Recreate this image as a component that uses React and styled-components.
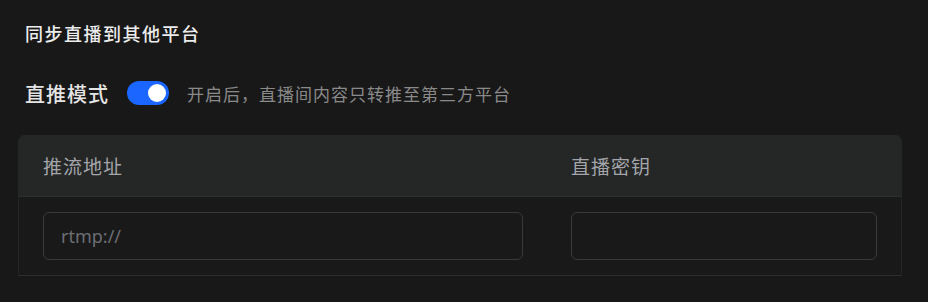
import React, { useState } from 'react';
import styled, { createGlobalStyle } from 'styled-components';

const GlobalStyle = createGlobalStyle`
  html, body {
    margin: 0;
    padding: 0;
    background: #181818;
  }
  body {
    font-family: "Noto Sans", "Noto Sans CJK SC", sans-serif;
  }
  * {
    box-sizing: border-box;
  }
`;

const Page = styled.div`
  width: 928px;
  height: 302px;
  padding: 22px 26px 0 18px;
  background: #181818;
  overflow: hidden;
`;

const Title = styled.h2`
  margin: 0 0 35px 7px;
  font-size: 18px;
  line-height: 24px;
  font-weight: 500;
  letter-spacing: 1.5px;
  color: #ececec;
`;

const ModeRow = styled.div`
  display: flex;
  align-items: center;
  height: 24px;
  margin: 0 0 30px 7px;
`;

const ModeLabel = styled.span`
  font-size: 20px;
  font-weight: 500;
  letter-spacing: 1px;
  color: #e4e4e4;
  margin-right: 18px;
`;

const Switch = styled.button`
  position: relative;
  width: 42px;
  height: 24px;
  padding: 0;
  border: none;
  border-radius: 12px;
  background: ${(p) => (p.$on ? '#1a66ff' : '#3a3a3a')};
  cursor: pointer;
  margin-right: 18px;
  flex-shrink: 0;

  &::after {
    content: '';
    position: absolute;
    top: 3px;
    left: ${(p) => (p.$on ? '21px' : '3px')};
    width: 18px;
    height: 18px;
    border-radius: 50%;
    background: #fff;
    transition: left 0.2s;
  }
`;

const Hint = styled.span`
  font-size: 17px;
  letter-spacing: 1px;
  color: #8a8a8a;
`;

const Table = styled.div`
  width: 884px;
  border: 1px solid #242525;
  border-bottom-color: #2d2d2d;
  border-radius: 6px 6px 0 0;
  overflow: hidden;
  background: #191919;
`;

const Row = styled.div`
  display: grid;
  grid-template-columns: 528px 1fr;
`;

const HeadRow = styled(Row)`
  height: 61px;
  background: #252727;
  border-bottom: 1px solid #2e2f2f;
`;

const HeadCell = styled.div`
  display: flex;
  align-items: center;
  padding: 0 24px;
  font-size: 19px;
  letter-spacing: 1px;
  color: #a3a5aa;
`;

const BodyCell = styled.div`
  padding: 15px 24px;
`;

const Input = styled.input`
  display: block;
  width: 100%;
  height: 48px;
  padding: 0 17px;
  border: 1px solid #393a3b;
  border-radius: 6px;
  background: #191919;
  font-family: "Noto Sans", "Noto Sans CJK SC", sans-serif;
  font-size: 18px;
  color: #d0d0d0;
  outline: none;

  &::placeholder {
    color: #6c6f75;
  }
`;

export default function App() {
  const [direct, setDirect] = useState(true);
  const [url, setUrl] = useState('');
  const [key, setKey] = useState('');

  return (
    <>
      <GlobalStyle />
      <Page>
        <Title>同步直播到其他平台</Title>
        <ModeRow>
          <ModeLabel>直推模式</ModeLabel>
          <Switch $on={direct} onClick={() => setDirect(!direct)} aria-label="直推模式" />
          <Hint>开启后，直播间内容只转推至第三方平台</Hint>
        </ModeRow>
        <Table>
          <HeadRow>
            <HeadCell>推流地址</HeadCell>
            <HeadCell>直播密钥</HeadCell>
          </HeadRow>
          <Row>
            <BodyCell>
              <Input placeholder="rtmp://" value={url} onChange={(e) => setUrl(e.target.value)} />
            </BodyCell>
            <BodyCell>
              <Input value={key} onChange={(e) => setKey(e.target.value)} />
            </BodyCell>
          </Row>
        </Table>
      </Page>
    </>
  );
}
